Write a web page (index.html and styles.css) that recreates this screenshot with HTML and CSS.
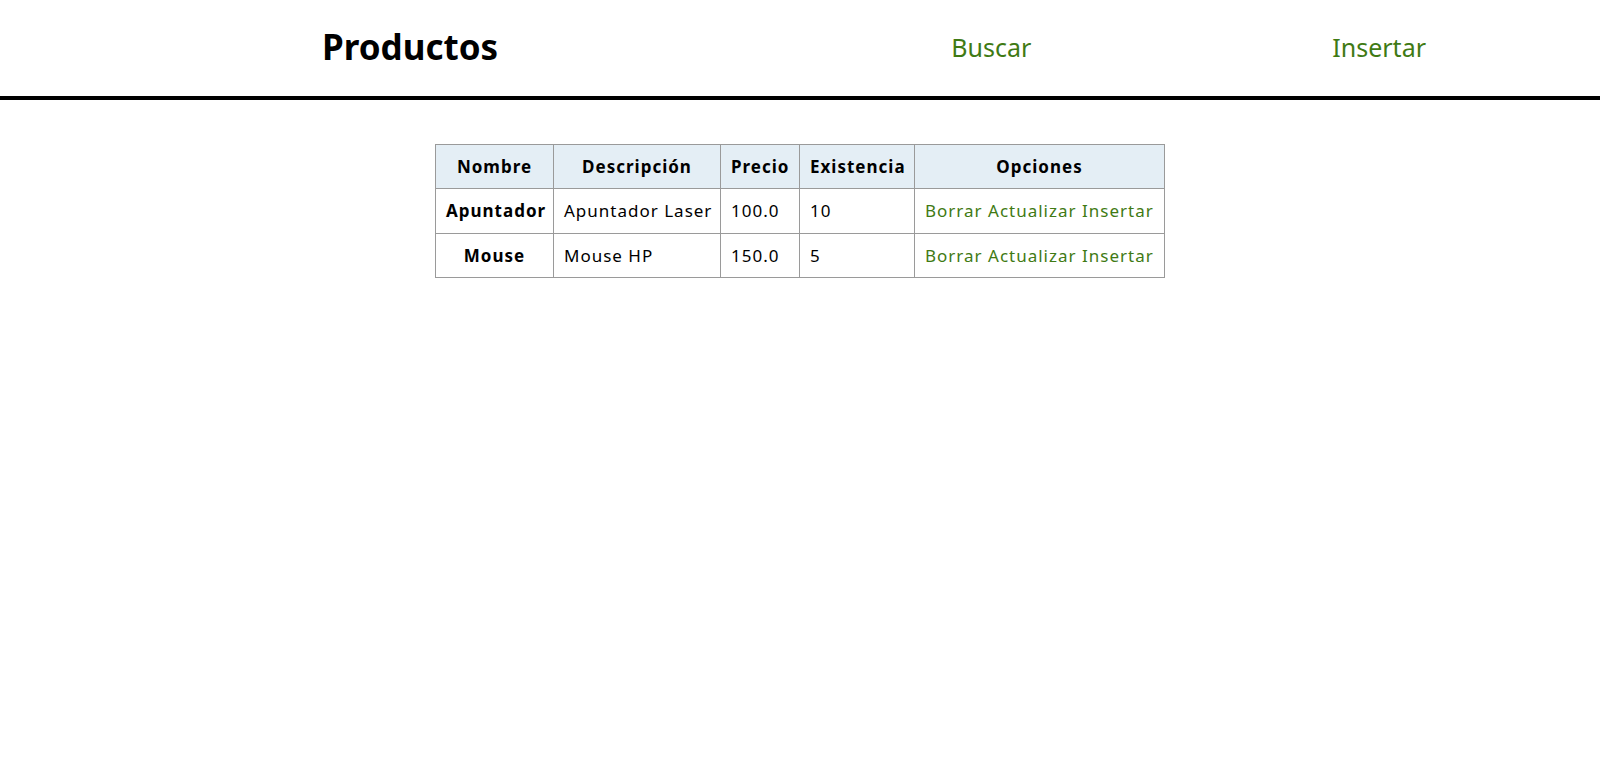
FILE: index.html
```html
<!DOCTYPE html>
<html lang="es">
<head>
<meta charset="utf-8">
<title>Productos</title>
<link rel="stylesheet" href="styles.css">
</head>
<body>
<header class="topbar">
  <h1 class="title">Productos</h1>
  <nav class="nav">
    <a href="#" class="nav-link">Buscar</a>
    <a href="#" class="nav-link">Insertar</a>
  </nav>
</header>
<main class="content">
  <table class="products">
    <colgroup>
      <col class="c-nombre">
      <col class="c-desc">
      <col class="c-precio">
      <col class="c-exist">
      <col class="c-opc">
    </colgroup>
    <thead>
      <tr>
        <th>Nombre</th>
        <th>Descripción</th>
        <th>Precio</th>
        <th>Existencia</th>
        <th>Opciones</th>
      </tr>
    </thead>
    <tbody>
      <tr>
        <th class="row-head">Apuntador</th>
        <td>Apuntador Laser</td>
        <td>100.0</td>
        <td>10</td>
        <td><a href="#" class="opt">Borrar</a> <a href="#" class="opt">Actualizar</a> <a href="#" class="opt">Insertar</a></td>
      </tr>
      <tr>
        <th class="row-head">Mouse</th>
        <td>Mouse HP</td>
        <td>150.0</td>
        <td>5</td>
        <td><a href="#" class="opt">Borrar</a> <a href="#" class="opt">Actualizar</a> <a href="#" class="opt">Insertar</a></td>
      </tr>
    </tbody>
  </table>
</main>
</body>
</html>
```
FILE: styles.css
```css
* { box-sizing: border-box; }
html, body {
  margin: 0;
  padding: 0;
  background: #fff;
  font-family: "Noto Sans", "Open Sans", sans-serif;
  color: #000;
}
.topbar {
  display: flex;
  align-items: center;
  height: 100px;
  padding: 0 174px 4px 322px;
  border-bottom: 4px solid #000;
}
.title {
  margin: 0;
  font-size: 35px;
  font-weight: 700;
  letter-spacing: 0;
}
.nav {
  margin-left: auto;
  display: flex;
  gap: 301px;
  padding-top: 2px;
}
.nav-link {
  color: #3f7a14;
  text-decoration: none;
  font-size: 25px;
}
.content {
  display: flex;
  justify-content: center;
  padding-top: 44px;
}
.products {
  border-collapse: collapse;
  width: 729px;
  table-layout: fixed;
  font-size: 17px;
  letter-spacing: 1px;
}
.c-nombre { width: 118px; }
.c-desc { width: 167px; }
.c-precio { width: 79px; }
.c-exist { width: 115px; }
.c-opc { width: 250px; }
.products th, .products td {
  border: 1px solid #9a9a9a;
  height: 44px;
  padding: 0 10px;
  white-space: nowrap;
}
.products tbody th, .products tbody td {
  height: 44.5px;
}
.products thead th {
  background: #e4eef5;
  font-weight: 700;
  text-align: center;
}
.products td { text-align: left; }
.products .row-head {
  font-weight: 700;
  text-align: center;
}
.opt {
  color: #3f7a14;
  text-decoration: none;
}
```
